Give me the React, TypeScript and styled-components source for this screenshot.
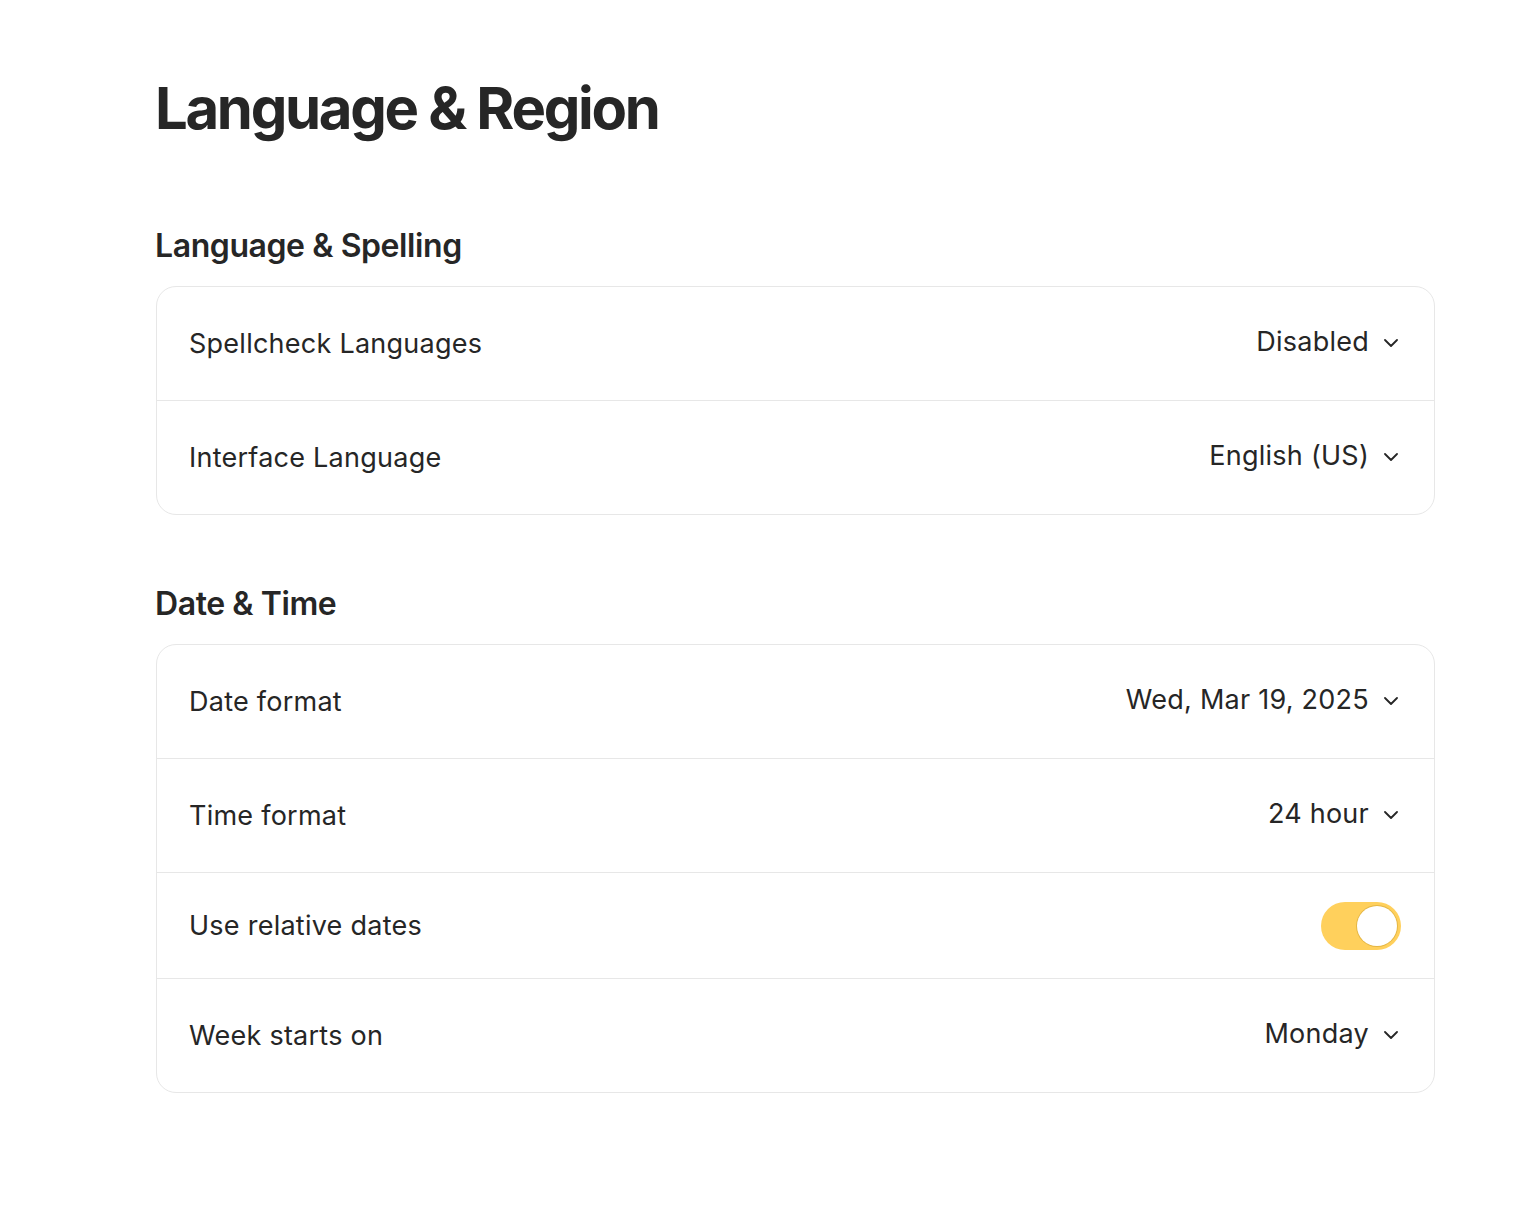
import React, { useState } from "react";
import styled, { createGlobalStyle } from "styled-components";

const GlobalStyle = createGlobalStyle`
  html, body {
    margin: 0;
    padding: 0;
    background: #ffffff;
  }
  body {
    font-family: Inter, "Noto Sans", "Liberation Sans", sans-serif;
    color: #262626;
    -webkit-font-smoothing: antialiased;
  }
`;

const Page = styled.main`
  padding: 72px 96px 80px 156px;
  display: flex;
  flex-direction: column;
`;

const Title = styled.h1`
  margin: 0 0 0 -1px;
  font-size: 58px;
  line-height: 72px;
  font-weight: 700;
  letter-spacing: -2.3px;
  color: #262626;
`;

const Section = styled.section<{ $top: number }>`
  display: flex;
  flex-direction: column;
  gap: 22px;
  margin-top: ${(p) => p.$top}px;
`;

const SectionTitle = styled.h2`
  margin: 0 0 0 -1px;
  font-size: 32px;
  line-height: 37px;
  font-weight: 600;
  letter-spacing: -0.42px;
  color: #262626;
`;

const Card = styled.div`
  border: 1px solid #e7e7e7;
  border-radius: 20px;
  display: flex;
  flex-direction: column;
  overflow: hidden;
`;

const Row = styled.div<{ $height: number }>`
  display: flex;
  align-items: center;
  justify-content: space-between;
  height: ${(p) => p.$height}px;
  padding: 0 33px 0 32px;
  & + & {
    border-top: 1px solid #e7e7e7;
  }
`;

const Label = styled.span`
  font-size: 27px;
  line-height: 32px;
  font-weight: 400;
  color: #262626;
  letter-spacing: 0.25px;
`;

const Select = styled.button`
  display: flex;
  align-items: center;
  gap: 15px;
  border: none;
  background: transparent;
  padding: 0 3px 4px 0;
  margin: 0;
  font-family: inherit;
  font-size: 27px;
  line-height: 32px;
  color: #262626;
  letter-spacing: 0.25px;
  cursor: pointer;
`;

const Chevron = styled.svg`
  width: 14px;
  height: 8px;
  flex: none;
  margin-top: 3px;
`;

const Toggle = styled.button<{ $on: boolean }>`
  position: relative;
  width: 80px;
  height: 48px;
  border-radius: 24px;
  border: none;
  padding: 0;
  background: ${(p) => (p.$on ? "#ffd05c" : "#e2e2e2")};
  cursor: pointer;
`;

const Knob = styled.span<{ $on: boolean }>`
  position: absolute;
  top: 4px;
  left: ${(p) => (p.$on ? "36px" : "4px")};
  width: 40px;
  height: 40px;
  border-radius: 50%;
  background: #ffffff;
  box-shadow: 0 0 0 1px rgba(196, 150, 40, 0.45);
  box-sizing: border-box;
`;

const ChevronIcon = () => (
  <Chevron viewBox="0 0 14 8" fill="none">
    <path d="M1 1 L7 7 L13 1" stroke="#262626" strokeWidth="1.8" strokeLinecap="round" strokeLinejoin="round" />
  </Chevron>
);

const SelectRow = ({ label, value }: { label: string; value: string }) => (
  <Row $height={113}>
    <Label>{label}</Label>
    <Select type="button">
      {value}
      <ChevronIcon />
    </Select>
  </Row>
);

export default function App() {
  const [relative, setRelative] = useState(true);
  return (
    <>
      <GlobalStyle />
      <Page>
        <Title>Language &amp; Region</Title>
        <Section $top={83}>
          <SectionTitle>Language &amp; Spelling</SectionTitle>
          <Card>
            <SelectRow label="Spellcheck Languages" value="Disabled" />
            <SelectRow label="Interface Language" value="English (US)" />
          </Card>
        </Section>
        <Section $top={70}>
          <SectionTitle>Date &amp; Time</SectionTitle>
          <Card>
            <SelectRow label="Date format" value="Wed, Mar 19, 2025" />
            <SelectRow label="Time format" value="24 hour" />
            <Row $height={105}>
              <Label>Use relative dates</Label>
              <Toggle type="button" $on={relative} onClick={() => setRelative(!relative)}>
                <Knob $on={relative} />
              </Toggle>
            </Row>
            <SelectRow label="Week starts on" value="Monday" />
          </Card>
        </Section>
      </Page>
    </>
  );
}
